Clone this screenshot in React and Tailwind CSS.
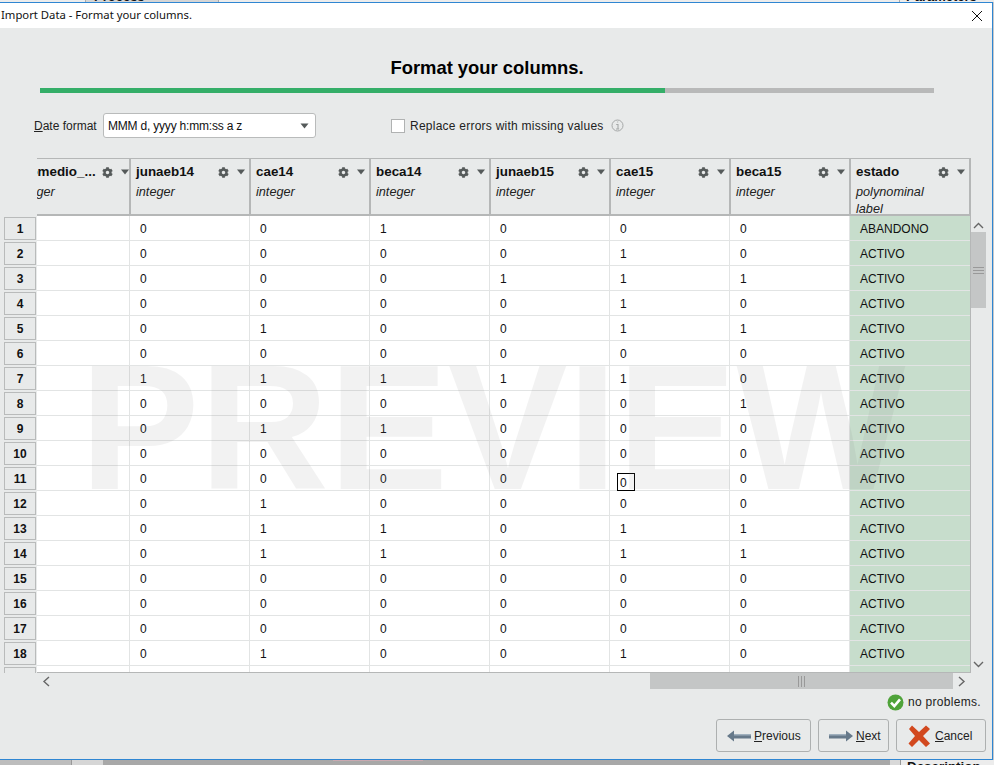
import { FaCog } from 'react-icons/fa';

const arial = 'font-["Liberation_Sans",Arial,sans-serif]';

const columns = [
  { name: 'promedio_...', type: 'integer', clipped: true },
  { name: 'junaeb14', type: 'integer' },
  { name: 'cae14', type: 'integer' },
  { name: 'beca14', type: 'integer' },
  { name: 'junaeb15', type: 'integer' },
  { name: 'cae15', type: 'integer' },
  { name: 'beca15', type: 'integer' },
  { name: 'estado', type: 'polynominal', role: 'label' },
];

// junaeb14, cae14, beca14, junaeb15, cae15, beca15
const rows = [
  '001000', '000010', '000111', '000010', '010011', '000000',
  '111110', '000001', '011000', '000000', '000000', '010000',
  '011011', '011011', '000000', '000000', '000000', '010010',
];

function Caret() {
  return (
    <svg width="10" height="6" viewBox="0 0 10 6" className="shrink-0">
      <polygon points="1,0.5 9,0.5 5,5.5" fill="#555a5a" />
    </svg>
  );
}

function HeaderCell({ col }) {
  const inner = (
    <div className={`relative w-[120px] h-full ${col.clipped ? 'pl-[1px]' : 'pl-[5px]'} pr-[5px] pt-[5px]`}>
      <div className="flex items-center h-[16px]">
        <span className="flex-1 font-bold text-[13.4px] leading-[16px] text-[#111] whitespace-nowrap">{col.name}</span>
        <FaCog className="text-[#555a5a] text-[11px] mr-[7px]" />
        <Caret />
      </div>
      <div className="mt-[4px] italic text-[12.7px] leading-[16px] text-[#222]">{col.type}</div>
      {col.role && <div className="mt-[1px] italic text-[12.7px] leading-[16px] text-[#222]">{col.role}</div>}
    </div>
  );
  if (col.clipped) {
    return (
      <div className="w-[94px] shrink-0 h-full overflow-hidden border-r-2 border-[#b5b7b7]">
        <div className="-ml-[22px] h-full">{inner}</div>
      </div>
    );
  }
  return <div className="w-[120px] shrink-0 h-full border-r-2 border-[#b5b7b7] overflow-hidden">{inner}</div>;
}

function Cell({ value, selected, wide }) {
  return (
    <div className={`${wide ? 'w-[93px]' : 'w-[120px]'} h-full border-r border-[#e2e4e4] pl-[10px] text-[12px] leading-[26px] text-[#111]`}>
      {selected ? (
        <span className="-ml-[3px] mt-[7px] pl-[2px] pt-[1px] flex items-center w-[18px] h-[18px] border border-black bg-white leading-none">{value}</span>
      ) : value}
    </div>
  );
}

function TableRow({ bits, label, index }) {
  return (
    <div className="flex h-[25px] border-b border-[#e2e4e4]">
      <Cell value="" wide />
      {bits.split('').map((b, i) => (
        <Cell key={i} value={b} selected={index === 10 && i === 4} />
      ))}
      <div className="w-[120px] h-full bg-[#c7ddcc] pl-[10px] text-[12px] leading-[26px] text-[#111]">{label}</div>
    </div>
  );
}

function ArrowIcon({ dir }) {
  return (
    <svg width="26" height="14" viewBox="0 0 26 14" className="shrink-0">
      <g transform={dir === 'left' ? '' : 'translate(26,0) scale(-1,1)'}>
        <polygon points="1,7 8,1.5 8,5 25,5 25,9.5 8,9.5 8,12.5" fill="#66798a" />
        <rect x="8" y="5" width="17" height="1.5" fill="#9fb0bd" />
      </g>
    </svg>
  );
}

function Btn({ className, children }) {
  return (
    <div className={`h-[33px] flex items-center border border-[#adb0b0] rounded-[3px] bg-[#e8eaea] text-[12px] text-[#222] ${className}`}>
      {children}
    </div>
  );
}

export default function App() {
  return (
    <div className={`${arial} w-[994px] h-[765px] overflow-hidden flex flex-col bg-[#a8a8a8]`}>
      {/* window behind, only a sliver shows */}
      <div className="h-[2px] overflow-hidden bg-[#ececec] flex items-end shrink-0">
        <div className="ml-[85px] w-[134px] h-[2px] bg-[#d5d5d5] border-x border-[#aaa] flex items-end">
          <span className="ml-[8px] shrink-0 font-bold text-[13px] leading-[10px] h-[10px] text-[#111]">Process</span>
        </div>
        <div className="ml-[680px] h-[2px] pl-[6px] border-l border-[#aaa] flex items-end">
          <span className="shrink-0 font-bold text-[13px] leading-[10px] h-[10px] text-[#111]">Parameters</span>
        </div>
      </div>

      <div className="flex-1 flex">
        <div className="w-[993px] flex flex-col border-t border-r border-b border-[#2f86d2] bg-[#e8eaea]">
          {/* title bar */}
          <div className="h-[25px] bg-white flex items-center justify-between pl-[1px] pr-[9px] shrink-0">
            <span className='font-["Noto_Sans",sans-serif] text-[11.3px] text-[#111]'>Import Data - Format your columns.</span>
            <svg width="12" height="12" viewBox="0 0 12 12">
              <path d="M1 1 L11 11 M11 1 L1 11" stroke="#111" strokeWidth="1" />
            </svg>
          </div>

          {/* heading + progress */}
          <div className="mt-[30px] pr-[18px] text-center font-bold text-[18.4px] leading-[20px] text-black">Format your columns.</div>
          <div className="mt-[10px] ml-[40px] w-[894px] h-[5px] flex bg-[#b8b9b9]">
            <div className="w-[625px] bg-[#34ae68]" />
          </div>

          {/* date format row */}
          <div className="mt-[20px] h-[25px] flex items-center text-[12px] text-[#222]">
            <span className="ml-[34px] w-[69px]"><u>D</u>ate format</span>
            <div className="w-[213px] h-[25px] bg-white border border-[#b9bbbb] rounded-[3px] flex items-center justify-between pl-[4px] pr-[6px] text-[#111]">
              <span className="tracking-[-0.2px]">MMM d, yyyy h:mm:ss a z</span>
              <svg width="9" height="6" viewBox="0 0 9 6"><polygon points="0.5,0.5 8.5,0.5 4.5,5.5" fill="#555a5a" /></svg>
            </div>
            <div className="ml-[75px] w-[14px] h-[14px] bg-white border border-[#b0b2b2]" />
            <span className="ml-[5px] tracking-[0.24px]">Replace errors with missing values</span>
            <svg width="13" height="13" viewBox="0 0 13 13" className="ml-[7px] -mt-[1px]">
              <circle cx="6.5" cy="6.5" r="5.5" fill="none" stroke="#a5a8a8" />
              <path d="M5.2 5.5 H7 V9.7 M5 10 H8.2 M6.2 3 H7.2" fill="none" stroke="#a5a8a8" strokeWidth="1.1" />
            </svg>
          </div>

          {/* table with row headers and vertical scrollbar */}
          <div className="mt-[20px] h-[515px] flex shrink-0">
            <div className="ml-[4px] w-[33px] h-[515px] overflow-hidden pt-[59px] flex flex-col gap-[2px]">
              {[...rows, ''].map((_, i) => (
                <div key={i} className="shrink-0 w-[32px] h-[23px] border border-[#b9bbbb] bg-[#e8eaea] flex items-center justify-center font-bold text-[12px] text-[#111]">
                  {i < rows.length ? i + 1 : ''}
                </div>
              ))}
            </div>

            <div className="relative w-[934px] h-[515px] overflow-hidden border-r border-b border-[#b5b7b7] bg-white">
              <div className="flex h-[58px] bg-[#e8eaea] border-t border-b-2 border-[#b5b7b7]">
                {columns.map((c) => <HeaderCell key={c.name} col={c} />)}
              </div>
              <div className="relative">
                {rows.map((r, i) => (
                  <TableRow key={i} bits={r} index={i} label={i === 0 ? 'ABANDONO' : 'ACTIVO'} />
                ))}
                <TableRow bits="      " label="" index={18} />
                {/* watermark sits over the cells */}
                <div className="absolute left-[43px] top-[121px] font-bold text-[179px] leading-[180px] text-[#7f7f7f1a] whitespace-nowrap pointer-events-none">PREVIEW</div>
              </div>
            </div>

            <div className="w-[15px] pt-[58px] flex flex-col items-center">
              <svg width="11" height="7" viewBox="0 0 11 7" className="mt-[6px]"><path d="M1 6 L5.5 1.5 L10 6" fill="none" stroke="#666" strokeWidth="1.4" /></svg>
              <div className="mt-[3px] w-[15px] h-[76px] bg-[#c4c6c6] flex items-center justify-center">
                <div className="w-[11px] h-[7px] border-y border-[#999] flex items-center"><div className="w-full h-px bg-[#999]" /></div>
              </div>
              <svg width="11" height="7" viewBox="0 0 11 7" className="mt-[353px]"><path d="M1 1 L5.5 5.5 L10 1" fill="none" stroke="#666" strokeWidth="1.4" /></svg>
            </div>
          </div>

          {/* horizontal scrollbar */}
          <div className="h-[16px] flex items-center">
            <svg width="8" height="11" viewBox="0 0 8 11" className="ml-[42px]"><path d="M7 1 L2 5.5 L7 10" fill="none" stroke="#666" strokeWidth="1.4" /></svg>
            <div className="ml-[600px] w-[303px] h-[16px] bg-[#c4c6c6] flex items-center justify-center">
              <div className="w-[7px] h-[11px] border-x border-[#999] flex justify-center"><div className="w-px h-full bg-[#999]" /></div>
            </div>
            <svg width="8" height="11" viewBox="0 0 8 11" className="ml-[5px]"><path d="M1 1 L6 5.5 L1 10" fill="none" stroke="#666" strokeWidth="1.4" /></svg>
          </div>

          {/* status */}
          <div className="mt-[4px] h-[18px] flex items-center justify-end pr-[11px] text-[12px] text-[#222]">
            <svg width="17" height="17" viewBox="0 0 17 17" className="mr-[4px]">
              <circle cx="8.5" cy="8.5" r="8" fill="#4fa33a" />
              <path d="M4 8.7 L7.3 12 L13 5.3" fill="none" stroke="#fff" strokeWidth="2.6" />
            </svg>
            <span className="tracking-[0.3px]">no problems.</span>
          </div>

          {/* buttons */}
          <div className="mt-[8px] flex justify-end gap-[7px] pr-[6px]">
            <Btn className="w-[95px] pl-[9px] gap-[2px] border-[#8f9292]">
              <ArrowIcon dir="left" />
              <span><u>P</u>revious</span>
            </Btn>
            <Btn className="w-[71px] pl-[9px] gap-[2px]">
              <ArrowIcon dir="right" />
              <span><u>N</u>ext</span>
            </Btn>
            <Btn className="w-[90px] pl-[10px] gap-[4px]">
              <svg width="24" height="24" viewBox="0 0 24 24" className="shrink-0">
                <path d="M2 5 L5 1.5 L12 8 L19 1.5 L23 5 L16 12 L23 19.5 L19 23 L12 16 L5 23 L1.5 19.5 L8 12 Z" fill="#d2491f" />
              </svg>
              <span><u>C</u>ancel</span>
            </Btn>
          </div>
        </div>
        <div className="w-[1px] bg-[#c9c9c9]" />
      </div>

      {/* bottom sliver of the window behind */}
      <div className="h-[5px] overflow-hidden flex shrink-0">
        <div className="w-[72px] bg-[#bdbdbd] border-r border-[#999]" />
        <div className="w-[31px] bg-[#d6d6d6]" />
        <div className="w-[787px] bg-[#a8a8a8]">
          <div className="ml-[230px] w-[90px] h-px bg-[#c9a9b0]" />
        </div>
        <div className="w-[11px] bg-[#d8d8d8] border-r border-[#999]" />
        <div className="flex-1 bg-[#ececec] pl-[6px] font-bold text-[13.4px] leading-[14px] text-[#111] whitespace-nowrap">Description</div>
      </div>
    </div>
  );
}
